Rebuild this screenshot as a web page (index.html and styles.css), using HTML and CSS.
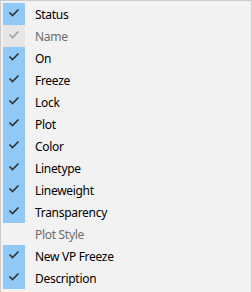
FILE: index.html
```html
<html>
<head>
<title>Columns</title>
<link rel="stylesheet" href="styles.css">
</head>
<body>
<div class="menu">
  <div class="item checked"><span class="box"><svg viewBox="0 0 22 22"><path d="M6.5 9.5 L9.5 12.5 L15.5 6.5"/></svg></span><span class="label">Status</span></div>
  <div class="item checked disabled"><span class="box"><svg viewBox="0 0 22 22"><path d="M6.5 9.5 L9.5 12.5 L15.5 6.5"/></svg></span><span class="label">Name</span></div>
  <div class="item checked"><span class="box"><svg viewBox="0 0 22 22"><path d="M6.5 9.5 L9.5 12.5 L15.5 6.5"/></svg></span><span class="label">On</span></div>
  <div class="item checked"><span class="box"><svg viewBox="0 0 22 22"><path d="M6.5 9.5 L9.5 12.5 L15.5 6.5"/></svg></span><span class="label">Freeze</span></div>
  <div class="item checked"><span class="box"><svg viewBox="0 0 22 22"><path d="M6.5 9.5 L9.5 12.5 L15.5 6.5"/></svg></span><span class="label">Lock</span></div>
  <div class="item checked"><span class="box"><svg viewBox="0 0 22 22"><path d="M6.5 9.5 L9.5 12.5 L15.5 6.5"/></svg></span><span class="label">Plot</span></div>
  <div class="item checked"><span class="box"><svg viewBox="0 0 22 22"><path d="M6.5 9.5 L9.5 12.5 L15.5 6.5"/></svg></span><span class="label">Color</span></div>
  <div class="item checked"><span class="box"><svg viewBox="0 0 22 22"><path d="M6.5 9.5 L9.5 12.5 L15.5 6.5"/></svg></span><span class="label">Linetype</span></div>
  <div class="item checked"><span class="box"><svg viewBox="0 0 22 22"><path d="M6.5 9.5 L9.5 12.5 L15.5 6.5"/></svg></span><span class="label">Lineweight</span></div>
  <div class="item checked"><span class="box"><svg viewBox="0 0 22 22"><path d="M6.5 9.5 L9.5 12.5 L15.5 6.5"/></svg></span><span class="label">Transparency</span></div>
  <div class="item disabled"><span class="box"></span><span class="label">Plot Style</span></div>
  <div class="item checked"><span class="box"><svg viewBox="0 0 22 22"><path d="M6.5 9.5 L9.5 12.5 L15.5 6.5"/></svg></span><span class="label">New VP Freeze</span></div>
  <div class="item checked"><span class="box"><svg viewBox="0 0 22 22"><path d="M6.5 9.5 L9.5 12.5 L15.5 6.5"/></svg></span><span class="label">Description</span></div>
</div>
</body>
</html>
```
FILE: styles.css
```css
body { margin:0; background:#f2f2f2; }
.menu {
  height:292px; box-sizing:border-box;
  border:1px solid #cccccc; border-bottom:none;
  padding:2px; background:#f2f2f2;
  font-family:"Noto Sans", "Open Sans", sans-serif; font-size:12px; letter-spacing:-0.3px; color:#000;
}
.item { display:flex; align-items:center; height:22px; }
.box { width:22px; height:22px; flex:none; }
.box svg { display:block; width:22px; height:22px; }
.box path { fill:none; stroke:#333; stroke-width:1.6; }
.checked .box { background:#90c8f6; }
.checked.disabled .box { background:#e6e6e6; }
.disabled .box path { stroke:#a0a0a0; }
.label { margin-left:10px; }
.disabled .label { color:#6d6d6d; }
```
